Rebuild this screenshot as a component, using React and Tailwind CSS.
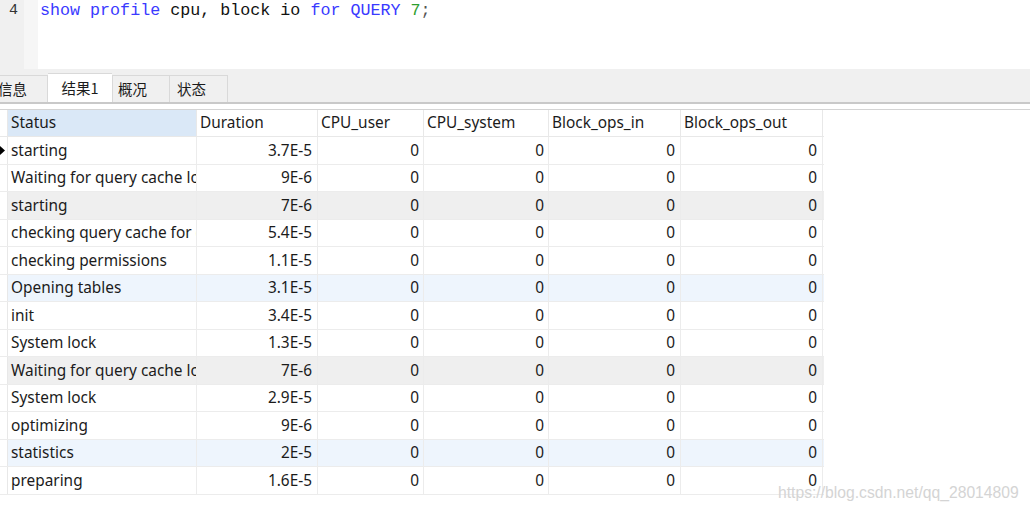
import React from "react";

const cols = [
  { key: "Status", w: "w-[189px]", align: "left" },
  { key: "Duration", w: "w-[121px]", align: "right" },
  { key: "CPU_user", w: "w-[106px]", align: "right" },
  { key: "CPU_system", w: "w-[125px]", align: "right" },
  { key: "Block_ops_in", w: "w-[132px]", align: "right" },
  { key: "Block_ops_out", w: "w-[142px]", align: "right" },
];

const rows = [
  ["starting", "3.7E-5", "w"],
  ["Waiting for query cache lock", "9E-6", "w"],
  ["starting", "7E-6", "g"],
  ["checking query cache for query", "5.4E-5", "w"],
  ["checking permissions", "1.1E-5", "w"],
  ["Opening tables", "3.1E-5", "b"],
  ["init", "3.4E-5", "w"],
  ["System lock", "1.3E-5", "w"],
  ["Waiting for query cache lock", "7E-6", "g"],
  ["System lock", "2.9E-5", "w"],
  ["optimizing", "9E-6", "w"],
  ["statistics", "2E-5", "b"],
  ["preparing", "1.6E-5", "w"],
];

const bgFor = { w: "bg-white", g: "bg-[#efefef]", b: "bg-[#eef5fd]" };

export default function App() {
  return (
    <div className="relative w-[1030px] h-[511px] bg-white overflow-hidden font-['Noto_Sans','Liberation_Sans',sans-serif] text-[#1b1b1b]">
      {/* Editor */}
      <div className="flex h-[69px]">
        <div className="w-[24px] bg-[#f0f0f0] flex justify-end pr-[6px] pt-[1px]">
          <span className="font-['Liberation_Mono',monospace] text-[15px] leading-[20px] text-[#333]">4</span>
        </div>
        <div className="w-[14px] bg-[#f6f6f6]" />
        <div className="flex-1 pl-[2px] pt-[1px]">
          <pre className="font-['Liberation_Mono',monospace] text-[16.7px] leading-[20px] text-[#111]">
            <span className="text-[#3a3aff]">show</span>{" "}
            <span className="text-[#3a3aff]">profile</span> cpu, block io{" "}
            <span className="text-[#3a3aff]">for</span>{" "}
            <span className="text-[#3a3aff]">QUERY</span>{" "}
            <span className="text-[#2e9e2e]">7</span>
            <span className="text-[#555]">;</span>
          </pre>
        </div>
      </div>

      {/* Tab bar */}
      <div className="h-[35px] bg-[#f0f0f0] border-b-2 border-[#c9c9c9] flex items-end font-['Noto_Sans_CJK_SC','Noto_Sans',sans-serif] text-[14.5px]">
        <div className="w-[48px] h-[27px] border-r border-t border-[#d9d9d9] flex items-center overflow-hidden">
          <span className="-ml-[2px]">信息</span>
        </div>
        <div className="w-[64px] h-[29px] bg-white border-t border-[#d9d9d9] flex items-center justify-center">
          结果1
        </div>
        <div className="w-[58px] h-[27px] border-r border-t border-l border-[#d9d9d9] flex items-center pl-[5px]">
          概况
        </div>
        <div className="w-[58px] h-[27px] border-r border-t border-[#d9d9d9] flex items-center pl-[7px]">
          状态
        </div>
      </div>

      {/* Gap */}
      <div className="h-[6px] bg-white border-b border-[#d4d4d4]" />

      {/* Table */}
      <div className="flex flex-col w-[824px] text-[15.4px]">
        <div className="flex h-[27px] border-b border-[#e8e8e8]">
          <div className="w-[8px] border-r border-[#e8e8e8] bg-white" />
          {cols.map((c, i) => (
            <div
              key={c.key}
              className={`${c.w} ${i === 0 ? "bg-[#dae8f7]" : "bg-white"} border-r border-[#e8e8e8] flex items-center pl-[3px] leading-none`}
            >
              {c.key}
            </div>
          ))}
        </div>
        {rows.map((r, idx) => (
          <div key={idx} className={`flex h-[27.5px] border-b border-[#ececec] ${bgFor[r[2]]}`}>
            <div className="w-[8px] border-r border-[#e8e8e8] bg-white flex items-center">
              {idx === 0 && (
                <svg width="6" height="9" viewBox="0 0 6 9">
                  <path d="M0 0 L5 4.5 L0 9 Z" fill="#000" />
                </svg>
              )}
            </div>
            <div className="w-[189px] border-r border-[#ececec] flex items-center pl-[3px] overflow-hidden whitespace-nowrap">
              {r[0]}
            </div>
            <div className="w-[121px] border-r border-[#ececec] flex items-center justify-end pr-[5px]">{r[1]}</div>
            <div className="w-[106px] border-r border-[#ececec] flex items-center justify-end pr-[4px]">0</div>
            <div className="w-[125px] border-r border-[#ececec] flex items-center justify-end pr-[4px]">0</div>
            <div className="w-[132px] border-r border-[#ececec] flex items-center justify-end pr-[5px]">0</div>
            <div className="w-[142px] border-r border-[#ececec] flex items-center justify-end pr-[5px]">0</div>
          </div>
        ))}
      </div>

      {/* Watermark */}
      <div className="absolute left-[778px] top-[484px] text-[15.7px] text-[#d4d4d4] font-['Liberation_Sans',sans-serif] leading-[18px]">
        https://blog.csdn.net/qq_28014809
      </div>
    </div>
  );
}
